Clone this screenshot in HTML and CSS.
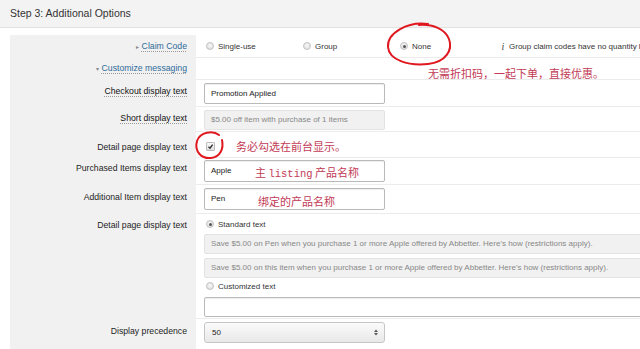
FILE: index.html
```html
<!DOCTYPE html>
<html>
<head>
<meta charset="utf-8">
<link rel="stylesheet" href="styles.css">
</head>
<body>
<div class="header">Step 3: Additional Options</div>
<div class="form">
  <div class="row r1">
    <div class="label pt5"><span class="link"><span class="tri">&#9656;</span> <span class="ul">Claim Code</span></span></div>
    <div class="field">
      <div class="radios">
        <div class="opt"><span class="radio"></span>Single-use</div>
        <div class="opt"><span class="radio"></span>Group</div>
        <div class="opt"><span class="radio on"></span>None</div>
        <div class="info"><span class="i">i</span>Group claim codes have no quantity lin</div>
      </div>
    </div>
  </div>
  <div class="row r2">
    <div class="label pt4"><span class="link"><span class="tri">&#9662;</span> <span class="ul">Customize messaging</span></span></div>
    <div class="field"><span class="note n1">无需折扣码，一起下单，直接优惠。</span></div>
  </div>
  <div class="row r3">
    <div class="label pt5"><span class="ul dark">Checkout display text</span></div>
    <div class="field pt3"><div class="input">Promotion Applied</div></div>
  </div>
  <div class="row r4">
    <div class="label pt5"><span class="ul dark">Short display text</span></div>
    <div class="field pt3"><div class="input dis h20">$5.00 off item with purchase of 1 items</div></div>
  </div>
  <div class="row r5">
    <div class="label pt9">Detail page display text</div>
    <div class="field pt10">
      <span class="check"><svg width="7" height="7" viewBox="0 0 7 7"><path d="M1.5 3.8 L3 5.2 L5.6 1.6" fill="none" stroke="#333" stroke-width="1.4"/></svg></span>
      <span class="note n2">务必勾选在前台显示。</span>
    </div>
  </div>
  <div class="row r6">
    <div class="label pt4">Purchased Items display text</div>
    <div class="field pt2"><div class="input h22">Apple</div><span class="note n3">主 <span class="mono">listing</span> 产品名称</span></div>
  </div>
  <div class="row r7">
    <div class="label pt6">Additional Item display text</div>
    <div class="field pt3"><div class="input h22">Pen</div><span class="note n4">绑定的产品名称</span></div>
  </div>
  <div class="row r8">
    <div class="label pt5">Detail page display text</div>
    <div class="field">
      <div class="opt line m5"><span class="radio on"></span>Standard text</div>
      <div class="input dis wide h20 m5">Save $5.00 on Pen when you purchase 1 or more Apple offered by Abbetter. Here's how (restrictions apply).</div>
      <div class="input dis wide h20 m4">Save $5.00 on this item when you purchase 1 or more Apple offered by Abbetter. Here's how (restrictions apply).</div>
      <div class="opt line m3"><span class="radio"></span>Customized text</div>
      <div class="input wide h20 m6"></div>
    </div>
  </div>
  <div class="row r9">
    <div class="label pt6">Display precedence</div>
    <div class="field pt3 nob">
      <div class="select"><span>50</span><svg width="4" height="7" viewBox="0 0 4 7"><path d="M0 3 L2 0.5 L4 3 Z M0 4 L2 6.5 L4 4 Z" fill="#555"/></svg></div>
    </div>
  </div>
</div>
<svg class="marks" width="640" height="349" viewBox="0 0 640 349">
  <path d="M428 24 C408 21 387 33 388 47 C389 60 408 66 428 64 C446 62 453 50 449 39 C445 29 433 24 419 25" fill="none" stroke="#e01820" stroke-width="2" stroke-linecap="round"/>
  <path d="M219 135 C213 130 200 132 197 141 C194 152 202 159 211 158 C220 157 224 149 222 140" fill="none" stroke="#e01820" stroke-width="2" stroke-linecap="round"/>
</svg>
</body>
</html>
```

FILE: styles.css
```css
body {
  margin: 0;
  width: 640px;
  height: 349px;
  overflow: hidden;
  position: relative;
  background: #fff;
  font-family: "Liberation Sans", Arial, sans-serif;
  color: #333;
}
.header {
  height: 27px;
  line-height: 27px;
  background: #f3f3f3;
  border-bottom: 1px solid #e2e2e2;
  padding-left: 10px;
  font-size: 10.5px;
  color: #333;
}
.form {
  margin: 7px 0 0 10px;
}
.row {
  display: grid;
  grid-template-columns: 186px 1fr;
}
.r1 { height: 23px; }
.r2 { height: 22px; }
.r3 { height: 27px; }
.r4 { height: 25px; }
.r5 { height: 26px; }
.r6 { height: 27px; }
.r7 { height: 29px; }
.r8 { height: 105px; }
.r9 { height: 30px; }
.label {
  background: #f1f1f1;
  text-align: right;
  padding-right: 9px;
  font-size: 8.7px;
  line-height: 12px;
  color: #1e1e1e;
  white-space: nowrap;
}
.pt4 { padding-top: 4px; }
.pt5 { padding-top: 5px; }
.pt6 { padding-top: 6px; }
.pt9 { padding-top: 9px; }
.field {
  position: relative;
  border-bottom: 1px solid #ececec;
  padding-left: 8px;
  box-sizing: border-box;
  white-space: nowrap;
}
.field.nob { border-bottom: none; }
.field.pt2 { padding-top: 2px; }
.field.pt3 { padding-top: 3px; }
.field.pt10 { padding-top: 10px; }
.link { color: #2f6b9a; }
.tri { color: #888; font-size: 6px; }
.ul {
  text-decoration: underline dotted #9a9a9a;
  text-underline-offset: 2px;
}
.dark { color: #111; }
.radios {
  display: flex;
  align-items: center;
  height: 22px;
  padding-left: 2px;
}
.opt {
  display: flex;
  align-items: center;
  gap: 4px;
  width: 97px;
  font-size: 8px;
  color: #333;
}
.opt.line {
  width: auto;
  height: 10px;
  padding-left: 2px;
}
.radio {
  width: 8px;
  height: 8px;
  border: 1px solid #c2c2c2;
  border-radius: 50%;
  box-sizing: border-box;
  background: radial-gradient(circle at 50% 40%, #f8f8f8, #d9d9d9);
  display: flex;
  align-items: center;
  justify-content: center;
}
.radio.on::after {
  content: "";
  width: 3px;
  height: 3px;
  border-radius: 50%;
  background: #555;
}
.info {
  display: flex;
  align-items: center;
  font-size: 8px;
  color: #333;
}
.info .i {
  font-family: "Liberation Serif", serif;
  font-style: italic;
  font-size: 10px;
  color: #444;
  width: 12px;
  text-align: center;
}
.input {
  width: 181px;
  height: 21px;
  box-sizing: border-box;
  border: 1px solid #b9b9b9;
  border-radius: 2px;
  background: #fff;
  box-shadow: inset 0 1px 1px rgba(0, 0, 0, 0.07);
  padding-left: 6px;
  font-size: 8px;
  line-height: 19px;
  color: #222;
  overflow: hidden;
}
.input.h20 { height: 20px; line-height: 18px; }
.input.h22 { height: 22px; line-height: 20px; }
.input.dis {
  background: #f1f1f1;
  border-color: #e3e3e3;
  box-shadow: none;
  color: #888;
}
.input.wide { width: 460px; }
.m3 { margin-top: 3px; }
.m4 { margin-top: 4px; }
.m5 { margin-top: 5px; }
.m6 { margin-top: 6px; }
.check {
  display: block;
  width: 9px;
  height: 9px;
  margin-left: 2px;
  box-sizing: border-box;
  border: 1px solid #bcbcbc;
  border-radius: 1px;
  background: linear-gradient(#fafafa, #dedede);
  position: relative;
}
.check svg {
  position: absolute;
  left: 0;
  top: 0;
}
.select {
  width: 181px;
  height: 21px;
  box-sizing: border-box;
  border: 1px solid #c6c6c6;
  border-radius: 3px;
  background: linear-gradient(#fbfbfb, #e8e8e8);
  display: flex;
  align-items: center;
  justify-content: space-between;
  padding: 0 6px 0 7px;
  font-size: 8px;
  color: #222;
}
.note {
  position: absolute;
  font-family: "Noto Sans CJK SC", sans-serif;
  font-size: 11px;
  line-height: 14px;
  color: #c23a55;
}
.note .mono {
  font-family: "Liberation Mono", monospace;
  font-size: 10.5px;
}
.n1 { left: 232px; top: 8px; }
.n2 { left: 40px; top: 7px; }
.n3 { left: 59px; top: 7px; }
.n4 { left: 62px; top: 9px; }
.marks {
  position: absolute;
  left: 0;
  top: 0;
  pointer-events: none;
}
```
